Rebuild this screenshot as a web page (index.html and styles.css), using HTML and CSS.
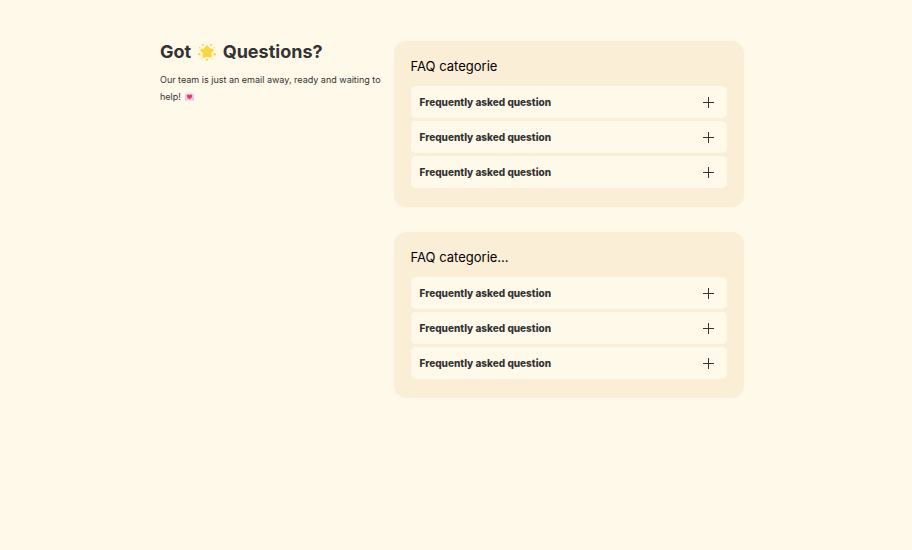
FILE: index.html
```html
<!DOCTYPE html>
<html lang="en">
<head>
<meta charset="utf-8">
<meta name="viewport" content="width=device-width, initial-scale=1">
<title>Got Questions?</title>
<link rel="stylesheet" href="styles.css">
</head>
<body>
<svg class="defs" aria-hidden="true">
  <symbol id="plus" viewBox="0 0 11 11"><path d="M0 5.5H11M5.5 0V11" stroke="currentColor" stroke-width="1" fill="none"/></symbol>
</svg>
<main class="faq">
  <header class="intro">
    <h1>Got <svg class="star" viewBox="0 0 20 20" role="img" aria-label="Glowing star"><g fill="#fcd53f" stroke="#fcd53f" stroke-linejoin="round"><path stroke-width="3" d="M10 4L12 7.3L16 8L13.2 11L13.6 15L10 13.5L6.4 15L6.8 11L4 8L8 7.3Z"/><g stroke="none"><circle cx="5.4" cy="2.2" r="1.2"/><circle cx="14.6" cy="2.2" r="1.2"/><circle cx="1.5" cy="12.4" r="1.3"/><circle cx="18.5" cy="12.4" r="1.3"/><circle cx="10" cy="18.4" r="1.3"/><circle cx="1.8" cy="5.2" r=".7"/><circle cx="18.2" cy="5.2" r=".7"/><circle cx="4" cy="17.6" r=".7"/><circle cx="16" cy="17.6" r=".7"/></g></g></svg> Questions?</h1>
    <p>Our team is just an email away, ready and waiting to help! <svg class="letter" viewBox="0 0 10 8" role="img" aria-label="Love letter"><rect x=".5" y=".7" width="9" height="6.8" rx=".6" fill="#e1d0e9"/><path d="M.8 7.2L4 4M9.2 7.2L6 4" stroke="#c6b2d3" stroke-width=".5"/><path d="M5 6.2C3.5 5.1 2.4 4.2 2.4 2.9C2.4 1.2 4.4 1 5 2.3C5.6 1 7.6 1.2 7.6 2.9C7.6 4.2 6.5 5.1 5 6.2Z" fill="#f8315f"/></svg></p>
  </header>
  <div class="categories">
    <section class="card">
      <h2>FAQ categorie</h2>
      <ul>
        <li><button type="button" aria-expanded="false">Frequently asked question<svg class="plus" aria-hidden="true"><use href="#plus"/></svg></button></li>
        <li><button type="button" aria-expanded="false">Frequently asked question<svg class="plus" aria-hidden="true"><use href="#plus"/></svg></button></li>
        <li><button type="button" aria-expanded="false">Frequently asked question<svg class="plus" aria-hidden="true"><use href="#plus"/></svg></button></li>
      </ul>
    </section>
    <section class="card">
      <h2>FAQ categorie...</h2>
      <ul>
        <li><button type="button" aria-expanded="false">Frequently asked question<svg class="plus" aria-hidden="true"><use href="#plus"/></svg></button></li>
        <li><button type="button" aria-expanded="false">Frequently asked question<svg class="plus" aria-hidden="true"><use href="#plus"/></svg></button></li>
        <li><button type="button" aria-expanded="false">Frequently asked question<svg class="plus" aria-hidden="true"><use href="#plus"/></svg></button></li>
      </ul>
    </section>
  </div>
</main>
</body>
</html>
```
FILE: styles.css
```css
* {
  box-sizing: border-box;
}

body {
  margin: 0;
  padding: 41px 8px 41px 0;
  background: #fff9e9;
  color: #333;
  font-family: Inter, sans-serif;
}

.defs {
  display: none;
}

.faq {
  display: grid;
  grid-template-columns: 2fr 3fr;
  width: 100%;
  max-width: 584px;
  margin: 0 auto;
}

h1,
h2,
p,
ul {
  margin: 0;
}

h1 {
  font-size: 18px;
  font-weight: 700;
  line-height: 22px;
}

.star {
  width: 18px;
  height: 18px;
  margin: 0 2px 0 3px;
  vertical-align: -3px;
}

.intro p {
  margin-top: 8px;
  font-size: 9px;
  line-height: 17px;
}

.letter {
  width: 11px;
  height: 8px;
  margin-left: 1px;
  vertical-align: -1px;
}

.categories {
  display: grid;
  align-content: start;
  gap: 25px;
}

.card {
  padding: 17px 17px 19px;
  border-radius: 12px;
  background: #faeed7;
}

h2 {
  color: #000;
  font-size: 13px;
  font-weight: 400;
  line-height: 16px;
}

ul {
  display: grid;
  gap: 3px;
  margin-top: 12px;
  padding: 0;
  list-style: none;
}

button {
  display: flex;
  align-items: center;
  justify-content: space-between;
  width: 100%;
  padding: 8px 13px 8px 9px;
  border: 0;
  border-radius: 5px;
  background: #fff9e9;
  color: #333;
  font: 800 10px/16px Inter, sans-serif;
  text-align: left;
}

.plus {
  width: 11px;
  height: 11px;
}
```
